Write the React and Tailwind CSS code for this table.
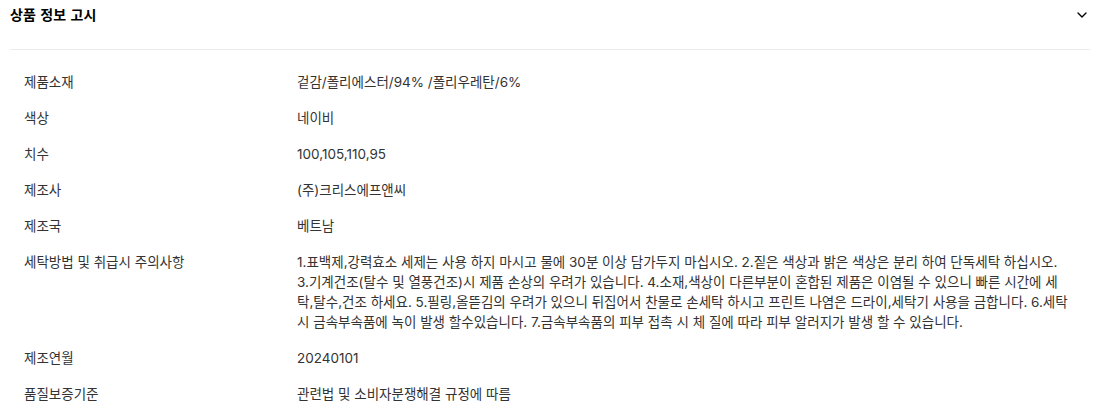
import { ChevronDown } from "lucide-react";

const rows = [
  { label: "제품소재", value: "겉감/폴리에스터/94% /폴리우레탄/6%" },
  { label: "색상", value: "네이비" },
  { label: "치수", value: "100,105,110,95" },
  { label: "제조사", value: "(주)크리스에프앤씨" },
  { label: "제조국", value: "베트남" },
  {
    label: "세탁방법 및 취급시 주의사항",
    value:
      "1.표백제,강력효소 세제는 사용 하지 마시고 물에 30분 이상 담가두지 마십시오. 2.짙은 색상과 밝은 색상은 분리 하여 단독세탁 하십시오. 3.기계건조(탈수 및 열풍건조)시 제품 손상의 우려가 있습니다. 4.소재,색상이 다른부분이 혼합된 제품은 이염될 수 있으니 빠른 시간에 세탁,탈수,건조 하세요. 5.필링,올뜯김의 우려가 있으니 뒤집어서 찬물로 손세탁 하시고 프린트 나염은 드라이,세탁기 사용을 금합니다. 6.세탁시 금속부속품에 녹이 발생 할수있습니다. 7.금속부속품의 피부 접촉 시 체 질에 따라 피부 알러지가 발생 할 수 있습니다.",
  },
  { label: "제조연월", value: "20240101" },
  { label: "품질보증기준", value: "관련법 및 소비자분쟁해결 규정에 따름" },
];

export default function App() {
  return (
    <div
      className="w-[1096px] h-[413px] bg-white text-[#333]"
      style={{ fontFamily: "Inter, 'Noto Sans CJK KR', sans-serif" }}
    >
      {/* 헤더 */}
      <div className="ml-[10px] mr-[6px] h-[50px] flex items-start justify-between border-b border-[#ececec]">
        <h3 className="mt-[5px] text-[14px] leading-[20px] font-semibold text-black [word-spacing:1px]">
          상품 정보 고시
        </h3>
        <ChevronDown className="mt-[7px] w-[16px] h-[16px] text-black" strokeWidth={2} />
      </div>

      {/* 고시 목록 */}
      <div className="pt-[14px] pl-[24px]">
        {rows.map((row) => (
          <div key={row.label} className="flex py-[8px] text-[13.5px] leading-[20px]">
            <div className="w-[273px] shrink-0">{row.label}</div>
            <div className="w-[776px]">{row.value}</div>
          </div>
        ))}
      </div>
    </div>
  );
}
